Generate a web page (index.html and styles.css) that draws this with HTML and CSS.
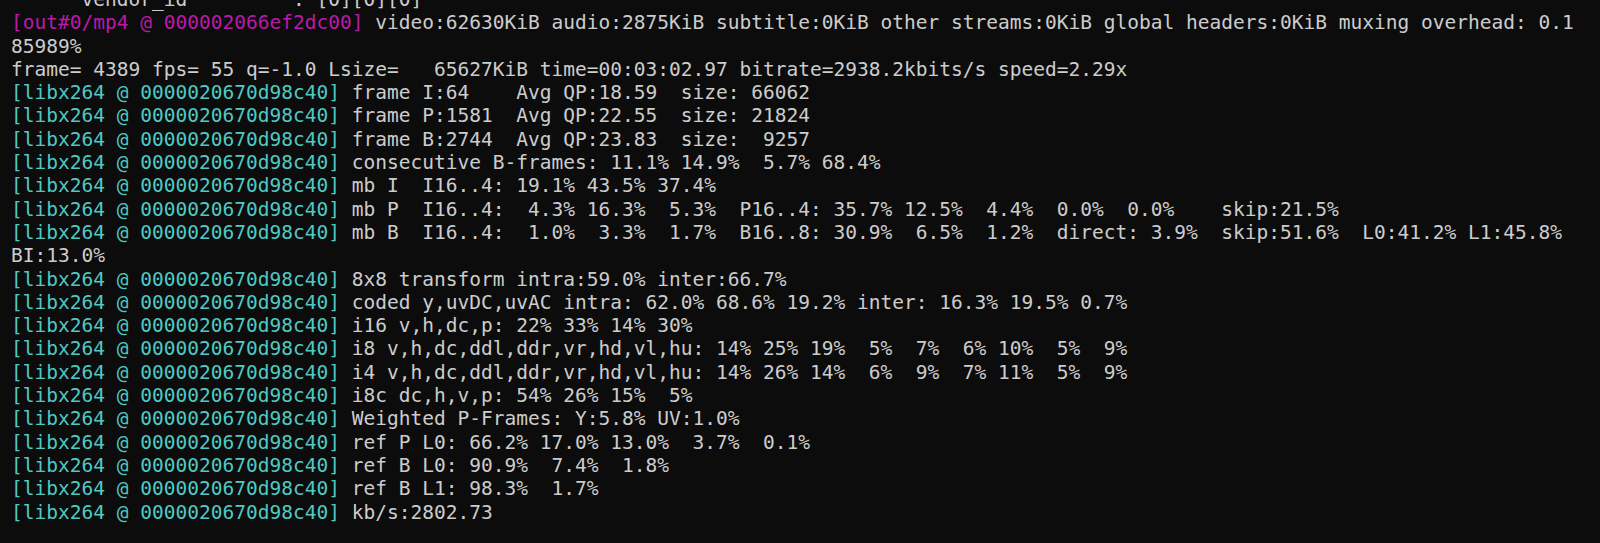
FILE: index.html
```html
<!DOCTYPE html>
<html>
<head>
<meta charset="utf-8">
<link rel="stylesheet" href="styles.css">
</head>
<body>
<div class="term">
<div class="ln">      vendor_id         : [0][0][0]</div>
<div class="ln"><span class="mux">[out#0/mp4 @ 000002066ef2dc00]</span> video:62630KiB audio:2875KiB subtitle:0KiB other streams:0KiB global headers:0KiB muxing overhead: 0.1</div>
<div class="ln">85989%</div>
<div class="ln">frame= 4389 fps= 55 q=-1.0 Lsize=   65627KiB time=00:03:02.97 bitrate=2938.2kbits/s speed=2.29x</div>
<div class="ln"><span class="enc">[libx264 @ 0000020670d98c40]</span> frame I:64    Avg QP:18.59  size: 66062</div>
<div class="ln"><span class="enc">[libx264 @ 0000020670d98c40]</span> frame P:1581  Avg QP:22.55  size: 21824</div>
<div class="ln"><span class="enc">[libx264 @ 0000020670d98c40]</span> frame B:2744  Avg QP:23.83  size:  9257</div>
<div class="ln"><span class="enc">[libx264 @ 0000020670d98c40]</span> consecutive B-frames: 11.1% 14.9%  5.7% 68.4%</div>
<div class="ln"><span class="enc">[libx264 @ 0000020670d98c40]</span> mb I  I16..4: 19.1% 43.5% 37.4%</div>
<div class="ln"><span class="enc">[libx264 @ 0000020670d98c40]</span> mb P  I16..4:  4.3% 16.3%  5.3%  P16..4: 35.7% 12.5%  4.4%  0.0%  0.0%    skip:21.5%</div>
<div class="ln"><span class="enc">[libx264 @ 0000020670d98c40]</span> mb B  I16..4:  1.0%  3.3%  1.7%  B16..8: 30.9%  6.5%  1.2%  direct: 3.9%  skip:51.6%  L0:41.2% L1:45.8%</div>
<div class="ln">BI:13.0%</div>
<div class="ln"><span class="enc">[libx264 @ 0000020670d98c40]</span> 8x8 transform intra:59.0% inter:66.7%</div>
<div class="ln"><span class="enc">[libx264 @ 0000020670d98c40]</span> coded y,uvDC,uvAC intra: 62.0% 68.6% 19.2% inter: 16.3% 19.5% 0.7%</div>
<div class="ln"><span class="enc">[libx264 @ 0000020670d98c40]</span> i16 v,h,dc,p: 22% 33% 14% 30%</div>
<div class="ln"><span class="enc">[libx264 @ 0000020670d98c40]</span> i8 v,h,dc,ddl,ddr,vr,hd,vl,hu: 14% 25% 19%  5%  7%  6% 10%  5%  9%</div>
<div class="ln"><span class="enc">[libx264 @ 0000020670d98c40]</span> i4 v,h,dc,ddl,ddr,vr,hd,vl,hu: 14% 26% 14%  6%  9%  7% 11%  5%  9%</div>
<div class="ln"><span class="enc">[libx264 @ 0000020670d98c40]</span> i8c dc,h,v,p: 54% 26% 15%  5%</div>
<div class="ln"><span class="enc">[libx264 @ 0000020670d98c40]</span> Weighted P-Frames: Y:5.8% UV:1.0%</div>
<div class="ln"><span class="enc">[libx264 @ 0000020670d98c40]</span> ref P L0: 66.2% 17.0% 13.0%  3.7%  0.1%</div>
<div class="ln"><span class="enc">[libx264 @ 0000020670d98c40]</span> ref B L0: 90.9%  7.4%  1.8%</div>
<div class="ln"><span class="enc">[libx264 @ 0000020670d98c40]</span> ref B L1: 98.3%  1.7%</div>
<div class="ln"><span class="enc">[libx264 @ 0000020670d98c40]</span> kb/s:2802.73</div>
</div>
</body>
</html>
```
FILE: styles.css
```css
html, body {
  margin: 0;
  padding: 0;
  background: #0c0c0c;
  overflow: hidden;
  height: 543px;
}
.term {
  margin-top: -12px;
  padding-left: 11px;
  font-family: "DejaVu Sans Mono", monospace;
  font-size: 19.53px;
  line-height: 23.3px;
  color: #cccccc;
}
.ln {
  white-space: pre;
  height: 23.3px;
}
.mux {
  color: #bb1aa8;
}
.enc {
  color: #4fc9c3;
}
```
